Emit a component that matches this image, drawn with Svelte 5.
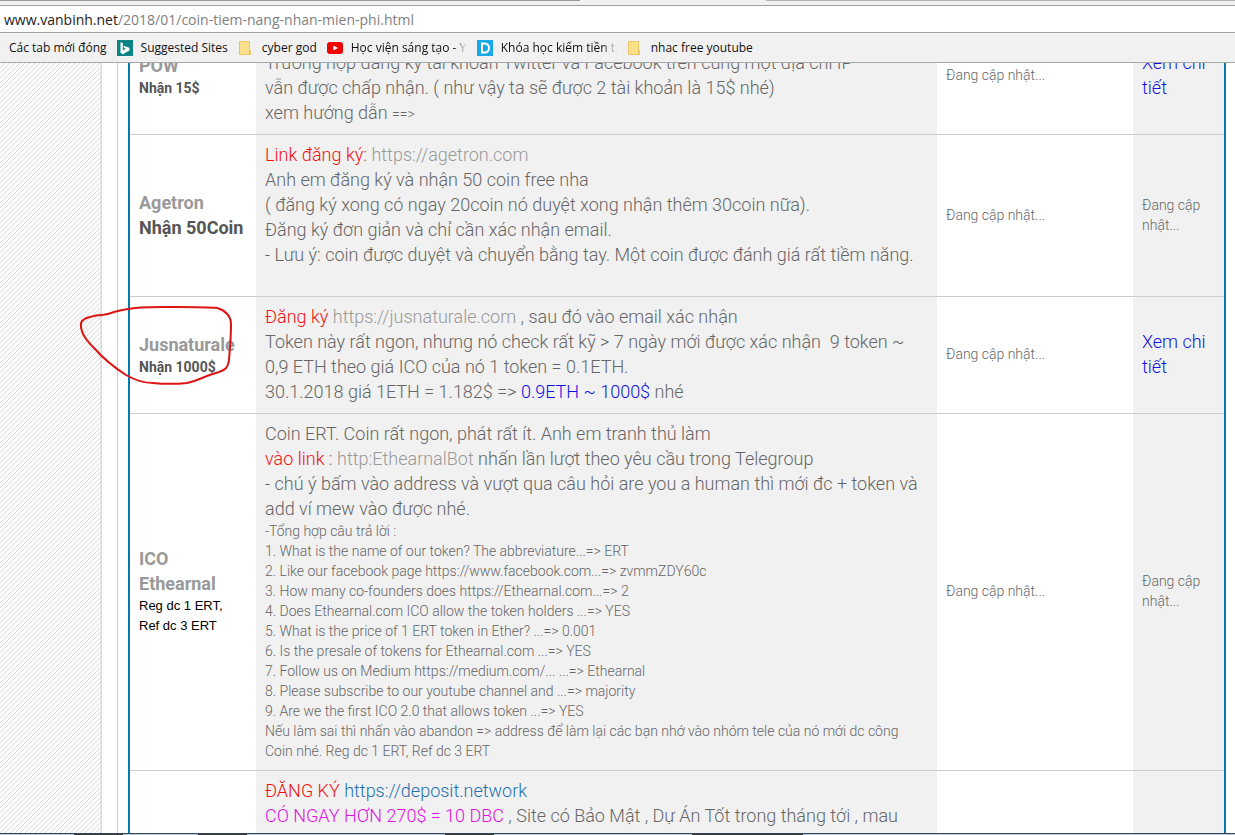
<script lang="ts">
    interface Bookmark {
        label: string;
        icon?: "bing" | "folder" | "youtube" | "d";
        faded?: boolean;
    }

    const bookmarks: Bookmark[] = [
        { label: "Các tab mới đóng" },
        { label: "Suggested Sites", icon: "bing" },
        { label: "cyber god", icon: "folder" },
        { label: "Học viện sáng tạo - Y", icon: "youtube", faded: true },
        { label: "Khóa học kiếm tiền tr", icon: "d", faded: true },
        { label: "nhac free youtube", icon: "folder" },
    ];

    const answers = [
        "1. What is the name of our token? The abbreviature...=> ERT",
        "2. Like our facebook page https://www.facebook.com...=> zvmmZDY60c",
        "3. How many co-founders does https://Ethearnal.com...=> 2",
        "4. Does Ethearnal.com ICO allow the token holders ...=> YES",
        "5. What is the price of 1 ERT token in Ether? ...=> 0.001",
        "6. Is the presale of tokens for Ethearnal.com ...=> YES",
        "7. Follow us on Medium https://medium.com/... ...=> Ethearnal",
        "8. Please subscribe to our youtube channel and ...=> majority",
        "9. Are we the first ICO 2.0 that allows token ...=> YES",
    ];

    let path = $state("/2018/01/coin-tiem-nang-nhan-mien-phi.html");
</script>

{#snippet icon(name: Bookmark["icon"])}
    <svg class="icon" viewBox="0 0 16 16" aria-hidden="true">
        {#if name === "bing"}
            <rect width="16" height="16" fill="#0c8484" />
            <path
                d="M3.5 2.2l2.3.8v7.6l3.1-1.8-1.6-.7-1-2.4 6.1 2.1v2.8L5.8 14.2l-2.3-1.4z"
                fill="#fff"
            />
        {:else if name === "folder"}
            <path d="M1.5 1.5h10v9h1v4h-11z" fill="#fde18a" stroke="#e9c765" />
            <path d="M11.5 11v3.5" stroke="#e9c765" />
        {:else if name === "youtube"}
            <rect y="2" width="16" height="12" rx="3" fill="#f00000" />
            <path d="M6.3 5.4v5.2L11 8z" fill="#fff" />
        {:else}
            <rect width="16" height="16" fill="#18a9e6" />
            <path
                d="M5 3.5h2.6a4.5 4.5 0 0 1 0 9H5z"
                fill="none"
                stroke="#fff"
                stroke-width="2"
            />
        {/if}
    </svg>
{/snippet}

<div class="browser">
    <div class="tab-edge"><i></i><i></i></div>
    <label class="address">
        <span>www.vanbinh.net</span>
        <input type="text" aria-label="Address" bind:value={path} />
    </label>
    <nav class="bookmarks">
        {#each bookmarks as b}
            <a href="#{b.label}">
                {#if b.icon}{@render icon(b.icon)}{/if}
                <span class:faded={b.faded}>{b.label}</span>
            </a>
        {/each}
    </nav>

    <main class="viewport">
        <div class="page">
            <div class="post">
                <table>
                    <colgroup>
                        <col class="col-name" />
                        <col />
                        <col class="col-status" />
                        <col class="col-detail" />
                    </colgroup>
                    <tbody>
                        <tr>
                            <th scope="row">
                                <a class="coin" href="#pow">POW</a>
                                <small>Nhận 15$</small>
                            </th>
                            <td>
                                <br />
                                Trường hợp đăng ký tài khoản Twitter và Facebook trên cùng một địa chỉ IP<br />
                                vẫn được chấp nhận. ( như vậy ta sẽ được 2 tài khoản là 15$ nhé)<br />
                                xem hướng dẫn <small>==&gt;</small>
                            </td>
                            <td><small class="line">Đang cập nhật...</small></td>
                            <td><a class="blue" href="#pow">Xem chi tiết</a></td>
                        </tr>
                        <tr>
                            <th scope="row">
                                <a class="coin" href="#agetron">Agetron</a>
                                Nhận 50Coin
                            </th>
                            <td>
                                <span class="red">Link đăng ký</span>:
                                <a class="gray" href="#agetron">https://agetron.com</a><br />
                                Anh em đăng ký và nhận 50 coin free nha<br />
                                ( đăng ký xong có ngay 20coin nó duyệt xong nhận thêm 30coin nữa).<br />
                                Đăng ký đơn giản và chỉ cần xác nhận email.<br />
                                - Lưu ý: coin được duyệt và chuyển bằng tay. Một coin được đánh giá rất tiềm năng.
                                <small class="line">&nbsp;</small>
                            </td>
                            <td><small class="line">Đang cập nhật...</small></td>
                            <td><small class="line">Đang cập nhật...</small></td>
                        </tr>
                        <tr>
                            <th scope="row">
                                <a class="coin" href="#jusnaturale">Jusnaturale</a>
                                <small>Nhận 1000$</small>
                                <svg class="scribble" viewBox="0 0 160 84" aria-hidden="true">
                                    <path
                                        d="M2 20C4 15 10 14 15 13C21 12 28 12 35 9C55 3 75 4 98 4C114 4 128 4 138 5C146 7 152 13 152 21C152 36 151 44 150 57C149 65 146 67 140 69C128 72 118 78 108 80C98 81 84 81 74 80C62 80 54 76 47 72C33 63 24 55 16 46C8 38 1 30 2 20Z"
                                    />
                                </svg>
                            </th>
                            <td>
                                <span class="red">Đăng ký</span>
                                <a class="gray" href="#jusnaturale">https://jusnaturale.com</a> , sau đó vào email xác nhận<br />
                                Token này rất ngon, nhưng nó check rất kỹ &gt; 7 ngày mới được xác nhận&nbsp; 9 token ~<br />
                                0,9 ETH theo giá ICO của nó 1 token = 0.1ETH.<br />
                                30.1.2018 giá 1ETH = 1.182$ =&gt;
                                <span class="blue">0.9ETH ~ 1000$</span> nhé
                            </td>
                            <td><small class="line">Đang cập nhật...</small></td>
                            <td><a class="blue" href="#jusnaturale">Xem chi tiết</a></td>
                        </tr>
                        <tr>
                            <th scope="row">
                                <a class="coin" href="#ethearnal">ICO<br />Ethearnal</a>
                                <span class="reward">Reg dc 1 ERT,<br />Ref dc 3 ERT</span>
                            </th>
                            <td>
                                Coin ERT. Coin rất ngon, phát rất ít. Anh em tranh thủ làm<br />
                                <span class="red">vào link</span> :
                                <a class="gray" href="#ethearnal">http:EthearnalBot</a> nhấn lần lượt theo yêu cầu trong Telegroup<br />
                                - chú ý bấm vào address và vượt qua câu hỏi are you a human thì mới đc + token và<br />
                                add ví mew vào được nhé.
                                <small class="line">-Tổng hợp câu trả lời :</small>
                                {#each answers as answer}
                                    <small class="line">{answer}</small>
                                {/each}
                                <small class="line">
                                    Nếu làm sai thì nhấn vào abandon =&gt; address để làm lại các bạn nhớ vào nhóm tele của nó mới dc công<br />
                                    Coin nhé. Reg dc 1 ERT, Ref dc 3 ERT
                                </small>
                            </td>
                            <td><small class="line">Đang cập nhật...</small></td>
                            <td><small class="line">Đang cập nhật...</small></td>
                        </tr>
                        <tr class="last">
                            <th></th>
                            <td>
                                <span class="red">ĐĂNG KÝ</span>
                                <a class="link" href="#deposit">https://deposit.network</a><br />
                                <span class="pink">CÓ NGAY HƠN 270$ = 10 DBC</span> , Site có Bảo Mật , Dự Án Tốt trong tháng tới , mau
                            </td>
                            <td></td>
                            <td></td>
                        </tr>
                    </tbody>
                </table>
            </div>
        </div>
    </main>
    <div class="taskbar"></div>
</div>

<style>
    :global(body) {
        background: #fff;
    }

    a {
        color: inherit;
        text-decoration: none;
    }

    .browser {
        display: flex;
        flex-direction: column;
        height: 100vh;
        overflow: hidden;
        font-family: "Open Sans", "Noto Sans", sans-serif;
    }

    .tab-edge {
        flex: none;
        display: flex;
        justify-content: space-between;
        height: 5px;
        background: #f1f1f1;
    }

    .tab-edge i {
        height: 1px;
        width: 47%;
        background: #999;
    }

    .tab-edge i:last-child {
        width: 38%;
        background: #b0b0b0;
    }

    .address {
        flex: none;
        display: flex;
        align-items: center;
        height: 26px;
        padding-left: 4px;
        border-top: 1px solid #a0a0a0;
        border-bottom: 1px solid #a0a0a0;
        background: #fff;
        color: #222;
        font-size: 14px;
    }

    .address input {
        flex: 1;
        min-width: 0;
        padding: 0;
        border: 0;
        outline: 0;
        background: none;
        color: #808080;
        font: inherit;
    }

    .bookmarks {
        flex: none;
        display: flex;
        align-items: center;
        gap: 10px;
        height: 29px;
        padding-left: 9px;
        border-bottom: 1px solid #a8a8a8;
        background: #f1f1f1;
        color: #111;
        font-size: 12px;
        line-height: 16px;
        white-space: nowrap;
    }

    .bookmarks a {
        display: flex;
        align-items: center;
        gap: 8px;
    }

    .icon {
        width: 16px;
        height: 16px;
    }

    .faded {
        width: 116px;
        overflow: hidden;
        mask-image: linear-gradient(to right, #000 88%, transparent);
    }

    .viewport {
        flex: 1;
        min-height: 0;
        overflow: hidden;
        background: linear-gradient(
            135deg,
            #dcdcdc 10%,
            #fcfcfc 10% 50%,
            #dcdcdc 50% 60%,
            #fcfcfc 60%
        );
        background-size: 5px 5px;
    }

    .page {
        min-height: 100%;
        margin-left: 102px;
        padding-left: 15px;
        background: #fff;
        box-shadow: 0 0 3px rgba(0, 0, 0, 0.3);
    }

    .post {
        padding: 0 9px 0 10px;
        border-left: 1px solid #ccc;
    }

    /* the page is scrolled part way into the first row */
    table {
        width: 100%;
        margin-top: -45px;
        table-layout: fixed;
        border-collapse: separate;
        border-spacing: 0;
        border: solid #0879b0;
        border-width: 0 2px;
        color: #666;
        font: 300 18px/25px Roboto, sans-serif;
    }

    .col-name {
        width: 126px;
    }

    .col-status {
        width: 196px;
    }

    .col-detail {
        width: 91px;
    }

    th,
    td {
        padding: 7px 9px 9px;
        border-bottom: 1px solid #ccc;
        text-align: left;
        vertical-align: middle;
    }

    th {
        position: relative;
        color: #555;
        font-weight: 700;
        white-space: nowrap;
    }

    td:nth-child(even) {
        background: #f1f1f1;
    }

    td:nth-child(2) {
        white-space: nowrap;
    }

    small {
        font-size: 14px;
        line-height: 20px;
    }

    .line,
    th small {
        display: block;
    }

    .coin {
        display: block;
        color: #999;
    }

    .reward {
        display: block;
        color: #000;
        font: 400 13px/20px "Liberation Sans", Arial, sans-serif;
    }

    .last td {
        height: 100px;
        vertical-align: top;
    }

    .gray {
        color: #999;
    }

    .red {
        color: #f01010;
    }

    .blue {
        color: #1010e0;
    }

    .pink {
        color: #e010e0;
    }

    .link {
        color: #1c72b0;
    }

    .scribble {
        position: absolute;
        top: 6px;
        left: -51px;
        width: 160px;
        height: 84px;
        fill: none;
        stroke: #dc1414;
        stroke-width: 2;
    }

    .taskbar {
        flex: none;
        height: 1px;
        border-top: 1px solid #34495e;
        background: linear-gradient(
            to right,
            #b8c8d8 6%,
            #333 6% 10%,
            #b8c8d8 10% 16%,
            #333 16% 20%,
            #b8c8d8 20% 36%,
            #333 36% 40%,
            #b8c8d8 40% 56%,
            #333 56% 65%,
            #b8c8d8 65%
        );
    }
</style>
